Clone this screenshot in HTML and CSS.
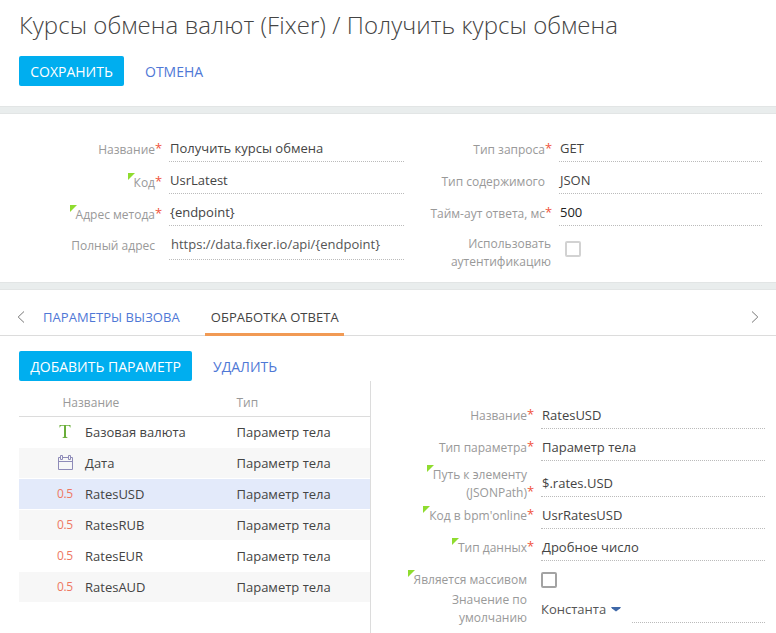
FILE: index.html
```html
<!DOCTYPE html>
<html lang="ru">
<head>
<meta charset="utf-8">
<title>Курсы обмена валют (Fixer)</title>
<link rel="stylesheet" href="styles.css">
</head>
<body>
<header class="head">
  <h1 class="title">Курсы обмена валют (Fixer) / Получить курсы обмена</h1>
  <div class="actions">
    <button class="btn btn-save">СОХРАНИТЬ</button>
    <a class="link">ОТМЕНА</a>
  </div>
</header>
<div class="band"></div>
<section class="form">
  <div class="col col-left">
    <div class="field"><label class="label"><span>Название</span><i class="req">*</i></label><div class="value">Получить курсы обмена</div></div>
    <div class="field low"><label class="label"><span class="tip">Код</span><i class="req">*</i></label><div class="value">UsrLatest</div></div>
    <div class="field low"><label class="label"><span class="tip">Адрес метода</span><i class="req">*</i></label><div class="value">{endpoint}</div></div>
    <div class="field full"><label class="label"><span>Полный адрес</span><i class="req"></i></label><div class="value readonly">https://data.fixer.io/api/{endpoint}</div></div>
  </div>
  <div class="col col-right">
    <div class="field"><label class="label"><span>Тип запроса</span><i class="req">*</i></label><div class="value">GET</div></div>
    <div class="field"><label class="label"><span>Тип содержимого</span><i class="req"></i></label><div class="value">JSON</div></div>
    <div class="field"><label class="label"><span>Тайм-аут ответа, мс</span><i class="req">*</i></label><div class="value strong">500</div></div>
    <div class="field auth"><label class="label"><span>Использовать<br>аутентификацию</span></label><span class="check light"></span></div>
  </div>
</section>
<div class="band"></div>
<nav class="tabs">
  <svg class="arrow" width="8" height="12" viewBox="0 0 8 12"><path d="M7 .5 1.200 6 7 11.500"/></svg>
  <a class="tab tab-call">ПАРАМЕТРЫ ВЫЗОВА</a>
  <a class="tab active">ОБРАБОТКА ОТВЕТА</a>
  <svg class="arrow next" width="8" height="12" viewBox="0 0 8 12"><path d="M1 .5 6.800 6 1 11.500"/></svg>
</nav>
<div class="actions toolbar">
  <button class="btn btn-add">ДОБАВИТЬ ПАРАМЕТР</button>
  <a class="link">УДАЛИТЬ</a>
</div>
<main class="main">
  <div class="list">
    <div class="row list-head"><span></span><span class="name">Название</span><span>Тип</span></div>
    <div class="row"><svg class="type" width="15" height="15" viewBox="0 0 15 15"><path class="letter" d="M1.500 3.500V1H12.500V3.500H12C11.800 2.200 11.300 1.700 10 1.700H8V12.200C8 13 8.500 13.300 9.500 13.400V14H4.500V13.400C5.500 13.300 6 13 6 12.200V1.700H4C2.700 1.700 2.200 2.200 2 3.500Z"/></svg><span>Базовая валюта</span><span>Параметр тела</span></div>
    <div class="row alt"><svg class="type" width="15" height="15" viewBox="0 0 15 15"><path class="cal" d="M2.500 2.500H.5V14.500H14.500V2.500H12.500M4.500 2.500H10.500M.5 6.500H14.500M2.500.5H4.500V4.500H2.500ZM10.500.5H12.500V4.500H10.500Z"/></svg><span>Дата</span><span>Параметр тела</span></div>
    <div class="row selected"><span class="num">0.5</span><span>RatesUSD</span><span>Параметр тела</span></div>
    <div class="row alt"><span class="num">0.5</span><span>RatesRUB</span><span>Параметр тела</span></div>
    <div class="row"><span class="num">0.5</span><span>RatesEUR</span><span>Параметр тела</span></div>
    <div class="row alt"><span class="num">0.5</span><span>RatesAUD</span><span>Параметр тела</span></div>
  </div>
  <div class="details">
    <div class="field"><label class="label"><span>Название</span><i class="req">*</i></label><div class="value">RatesUSD</div></div>
    <div class="field"><label class="label"><span>Тип параметра</span><i class="req">*</i></label><div class="value">Параметр тела</div></div>
    <div class="field path"><label class="label"><span class="tip">Путь к элементу<br>(JSONPath)</span><i class="req">*</i></label><div class="value">$.rates.USD</div></div>
    <div class="field"><label class="label"><span class="tip">Код в bpm'online</span><i class="req">*</i></label><div class="value">UsrRatesUSD</div></div>
    <div class="field"><label class="label"><span class="tip">Тип данных</span><i class="req">*</i></label><div class="value">Дробное число</div></div>
    <div class="field array"><label class="label"><span class="tip">Является массивом</span><i class="req"></i></label><span class="check"></span></div>
    <div class="field default"><label class="label"><span>Значение по<br>умолчанию</span><i class="req"></i></label><div class="choice">Константа<svg class="caret" width="10" height="5" viewBox="0 0 10 5"><path d="M0 0H10L9 1.500 5 4.500 1 1.500Z"/></svg></div><div class="value"></div></div>
  </div>
</main>
</body>
</html>
```
FILE: styles.css
```css
* { box-sizing: border-box; }
body {
  margin: 0;
  height: 633px;
  overflow: hidden;
  background: #fff;
  color: #444;
  font: 13px/20px "Open Sans", sans-serif;
}
.head { height: 106px; padding: 10px 19px 0; }
.title {
  margin: 0 0 16px;
  font-size: 24px;
  letter-spacing: .06px;
  line-height: 30px;
  font-weight: 300;
  white-space: nowrap;
}
.actions { display: flex; gap: 21px; }
.btn {
  height: 30px;
  padding: 0;
  border: 0;
  border-radius: 2px;
  background: #00aeef;
  color: #fff;
  font: 14px/30px "Open Sans", sans-serif;
  padding-top: 1px;
}
.btn-save { width: 105px; }
.btn-add { width: 173px; }
.link { color: #4f78d6; font-size: 14px; line-height: 32px; height: 30px; }
.band {
  height: 8px;
  background: #e9eded;
  border: solid #e2e5e5;
  border-width: 1px 0;
}

.form { display: flex; height: 168px; padding-top: 16px; }
.col-left { width: 404px; }
.col-right { width: 358px; }
.field { display: flex; height: 32px; }
.label {
  flex: none;
  display: flex;
  justify-content: flex-end;
  align-items: flex-end;
  align-self: flex-start;
  padding-top: 11px;
  color: #999;
  font-size: 12px;
  line-height: 18px;
  text-align: right;
  white-space: nowrap;
}
.low .label { padding-top: 12px; }
.col-left .label { width: 162px; margin-right: 7px; }
.col-right .label { width: 148px; margin-right: 7px; }
.req {
  width: 7px;
  height: 20px;
  margin-top: -2px;
  color: #f0543c;
  font-style: normal;
  font-size: 13px;
  text-align: center;
}
.tip { position: relative; }
.tip::before {
  content: "";
  position: absolute;
  left: -6px;
  top: -1px;
  border-top: 7px solid #8fdc2f;
  border-right: 7px solid transparent;
}
.value {
  flex: 1;
  padding: 8px 0 0 1px;
  border-bottom: 1px dotted #bbb;
  white-space: nowrap;
}
.strong { color: #222; }
.full { height: 34px; }
.readonly { color: #555; padding-left: 2px; }
.auth { height: 44px; }
.auth .label { padding-top: 9px; }
.col-right .auth .label { width: 147px; margin-right: 14px; }
.check { width: 16px; height: 16px; border: 2px solid #a3a3a3; border-radius: 2px; }
.check.light { border-color: #d2d2d2; margin-top: 15px; }

.tabs {
  display: flex;
  height: 46px;
  padding: 0 17px;
  border-bottom: 1px solid #dcdcdc;
}
.arrow { margin-top: 21px; fill: none; stroke: #777; }
.next { margin-left: auto; }
.tab {
  height: 46px;
  padding: 17px 6px 0;
  color: #4f78d6;
  letter-spacing: .06px;
  white-space: nowrap;
}
.tab-call { margin: 0 19px 0 12px; }
.active { color: #444; border-bottom: 3px solid #f19a54; width: 139px; }
.toolbar { height: 45px; padding: 15px 19px 0; }

.main { display: flex; height: 252px; }
.list { width: 371px; padding-left: 19px; border-right: 1px solid #dcdcdc; }
.row {
  display: grid;
  grid-template-columns: 66px 151.500px 1fr;
  height: 30px;
  line-height: 30px;
  margin-bottom: 1px;
}
.list-head {
  height: 36px;
  margin-bottom: 0;
  padding-top: 7px;
  border-bottom: 1px solid #dcdcdc;
  color: #999;
  font-size: 12px;
}
.name { margin-left: -22.500px; }
.alt { background: #f7f7f7; }
.selected { background: #e3eafa; }
.type { margin: 7px 0 0 39px; }
.letter { fill: #6aae3a; }
.cal { fill: none; stroke: #8e8bb8; }
.num { padding-left: 38px; color: #ee7762; font-size: 12px; letter-spacing: -.4px; }

.details { width: 394px; padding-top: 16px; }
.details .label { width: 163px; padding-top: 10px; margin-right: 7px; }
.path { height: 36px; }
.path .value { padding-top: 12px; }
.details .path .label { padding-top: 5px; }
.array { height: 29px; }
.array .check { margin-top: 11px; }
.default { height: 33px; }
.details .default .label { padding-top: 1px; }
.choice { width: 91px; padding-top: 9px; color: #555; white-space: nowrap; }
.caret { margin: 0 0 2px 5px; fill: #3f68a8; }
```
